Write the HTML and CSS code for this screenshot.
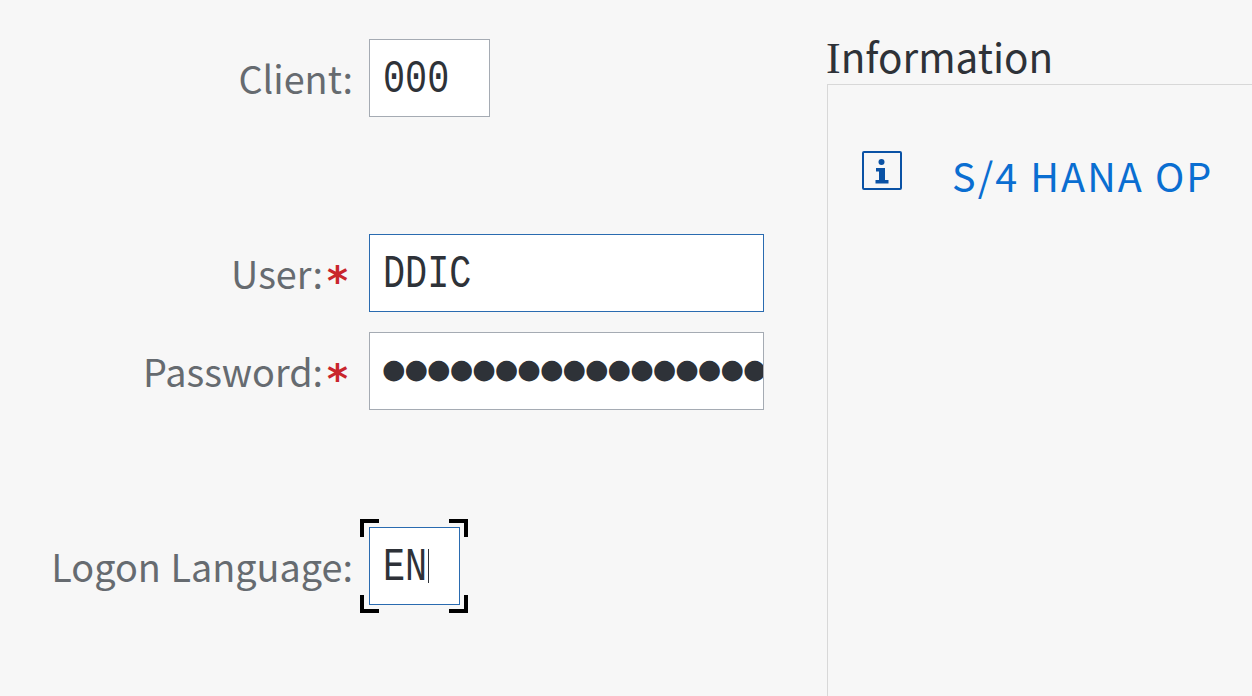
FILE: index.html
```html
<!DOCTYPE html>
<html>

<head>
  <meta charset="UTF-8">
  <title>Logon</title>
  <link rel="stylesheet" href="styles.css">
</head>

<body>
  <div class="logon">
    <form class="logon-form">
      <div class="label row-client">Client:</div>
      <div class="field field-client row-client"><span class="value">000</span></div>

      <div class="label label-required row-user">User:<span class="required">*</span></div>
      <div class="field field-wide field-active row-user"><span class="value">DDIC</span></div>

      <div class="label label-required row-password">Password:<span class="required">*</span></div>
      <div class="field field-wide row-password"><span class="dots">●●●●●●●●●●●●●●●●●●●●</span></div>

      <div class="label row-language">Logon Language:</div>
      <div class="field field-language field-active row-language">
        <span class="value">EN</span><span class="caret"></span>
        <span class="corner top-left"></span>
        <span class="corner top-right"></span>
        <span class="corner bottom-left"></span>
        <span class="corner bottom-right"></span>
      </div>
    </form>

    <section class="info">
      <h2 class="info-title"><span class="serif-letter">I</span>nformation</h2>
      <div class="info-panel">
        <svg class="info-icon" viewBox="0 0 40 40" xmlns="http://www.w3.org/2000/svg">
          <rect x="1" y="1" width="38" height="37" rx="1" fill="none" stroke="#0a52a5" stroke-width="2"/>
          <circle cx="19.500" cy="11" r="3" fill="#0a52a5"/>
          <path d="m14 17h9v12h3.500v3.500h-13v-3.500h3.500v-8.500h-3z" fill="#0a52a5"/>
        </svg>
        <span class="info-text">S/4 HANA OP</span>
      </div>
    </section>
  </div>
</body>

</html>
```

FILE: styles.css
```css
html {
    box-sizing: border-box;
}

*, ::before, ::after {
    box-sizing: inherit;
}

body {
    margin: 0;
    height: 696px;
    overflow: hidden;
    background-color: #f7f7f7;
    font-family: "Noto Sans CJK JP", "Noto Sans", sans-serif;
}

.logon {
    display: flex;
    height: 100%;
}

/* FORM */

.logon-form {
    width: 827px;
    flex: none;
    padding-top: 39px;
    display: grid;
    grid-template-columns: 369px max-content;
    grid-template-rows: 78px 117px 78px 20px 78px 117px 78px;
    align-items: center;
    align-content: start;
    justify-items: start;
}

.row-client {grid-row: 1;}
.row-user {grid-row: 3;}
.row-password {grid-row: 5;}
.row-language {grid-row: 7;}

.label {
    grid-column: 1;
    justify-self: end;
    padding-right: 16px;
    font-size: 37.8px;
    line-height: 78px;
    word-spacing: 1px;
    color: #666b70;
    white-space: nowrap;
}

.label-required {
    padding-right: 21px;
}

.required {
    font-family: "DejaVu Sans", sans-serif;
    font-size: 40px;
    font-weight: bold;
    line-height: 0;
    vertical-align: -6px;
    color: #c9262c;
    margin-left: 4px;
}

.field {
    grid-column: 2;
    position: relative;
    height: 78px;
    padding-left: 14px;
    border: 1px solid #a5abb3;
    background-color: #fff;
    display: flex;
    align-items: center;
    white-space: nowrap;
    overflow: hidden;
}

.field-client {width: 121px;}
.field-wide {width: 395px;}
.field-language {width: 91px; overflow: visible;}

.field-active {
    border-color: #2a6bb0;
}

.value {
    display: inline-block;
    margin-left: -1px;
    padding-top: 4px;
    font-family: "Liberation Mono", monospace;
    font-size: 46px;
    color: #2e3238;
    width: 120px;
    transform: scaleX(.8);
    transform-origin: left;
}

.field-language .value {
    width: 45px;
}

.caret {
    width: 1px;
    height: 34px;
    background-color: #2e3238;
}

.dots {
    margin-left: -2px;
    padding-bottom: 6px;
    font-family: "DejaVu Sans", sans-serif;
    font-size: 27px;
    letter-spacing: -1px;
    color: #2e3238;
}

/* FOCUS CORNERS */

.corner {
    position: absolute;
    width: 19px;
    height: 18px;
    border: 0 solid #000;
}

.top-left {top: -9px; left: -10px; border-width: 4px 0 0 4px;}
.top-right {top: -9px; right: -9px; border-width: 4px 4px 0 0;}
.bottom-left {bottom: -9px; left: -10px; border-width: 0 0 4px 4px;}
.bottom-right {bottom: -9px; right: -9px; border-width: 0 4px 4px 0;}

/* INFORMATION */

.info {
    flex: 1;
    display: flex;
    flex-direction: column;
}

.info-title {
    margin: 0 0 0 -1px;
    height: 84px;
    padding-top: 30px;
    font-size: 40.4px;
    line-height: 52px;
    font-weight: normal;
    color: #2e3238;
}

.serif-letter {
    font-family: "Liberation Serif", serif;
    font-size: 44px;
}

.info-panel {
    flex: 1;
    border-top: 1px solid #d8d8d8;
    border-left: 1px solid #d8d8d8;
    padding: 66px 0 0 34px;
    display: flex;
    align-items: flex-start;
    gap: 50px;
}

.info-icon {
    width: 40px;
    height: 40px;
    flex: none;
}

.info-text {
    margin-top: -2px;
    font-size: 39.5px;
    letter-spacing: 2.1px;
    line-height: 52px;
    color: #0a6ed1;
    white-space: nowrap;
}
```
